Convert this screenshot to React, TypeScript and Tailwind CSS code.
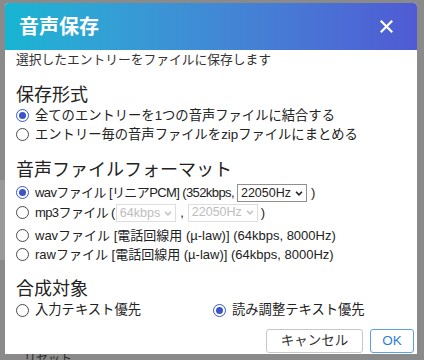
import React from "react";

const FONT = { fontFamily: '"Liberation Sans", Arial, "Noto Sans CJK JP", sans-serif' };

function Radio({ checked }: { checked?: boolean }) {
  return checked ? (
    <span className="inline-flex h-[13px] w-[13px] shrink-0 items-center justify-center rounded-full border-[1.5px] border-[#3b55c9]">
      <span className="h-[7px] w-[7px] rounded-full bg-[#3b55c9]" />
    </span>
  ) : (
    <span className="inline-block h-[13px] w-[13px] shrink-0 rounded-full border border-[#4a4a4a]" />
  );
}

function Chevron({ color }: { color: string }) {
  return (
    <svg width="8" height="5" viewBox="0 0 8 5" className="ml-[4px] shrink-0">
      <path d="M1 0.8 L4 3.8 L7 0.8" fill="none" stroke={color} strokeWidth="1.6" />
    </svg>
  );
}

function Select({ value, disabled }: { value: string; disabled?: boolean }) {
  return (
    <span
      className={
        "inline-flex h-[18px] items-center border pl-[3px] pr-[3px] text-[12.5px] " +
        (disabled ? "border-[#dedede] text-[#bdbdbd]" : "border-[#8f8f8f] text-[#222]")
      }
    >
      <span className="leading-none">{value}</span>
      <Chevron color={disabled ? "#c4c4c4" : "#222"} />
    </span>
  );
}

function Row({ checked, children, h = "h-[19px]" }: { checked?: boolean; children: React.ReactNode; h?: string }) {
  return (
    <div className={"flex items-center gap-[6px] " + h}>
      <Radio checked={checked} />
      <span className="flex items-center whitespace-nowrap">{children}</span>
    </div>
  );
}

export default function App() {
  return (
    <div className="relative h-[360px] w-[424px] overflow-hidden bg-[#8a8a8a]" style={FONT}>
      <div className="absolute left-0 top-[180px] h-[80px] w-[5px] bg-[#9a9a9a]" />
      <div className="absolute bottom-[-8px] left-[24px] text-[12px] text-[#2a2a2a]">リセット</div>
      <div className="absolute left-[5px] top-[3px] flex h-[351px] w-[412px] flex-col overflow-hidden rounded-t-[4px] bg-white text-[#222]">
        <div className="flex h-[47px] shrink-0 items-center justify-between bg-gradient-to-r from-[#15b5d3] to-[#4f5ad4] pl-[14px] pr-[24px]">
          <span className="text-[20px] font-bold text-white">音声保存</span>
          <svg width="13" height="13" viewBox="0 0 13 13">
            <path d="M1.5 1.5 L11.5 11.5 M11.5 1.5 L1.5 11.5" stroke="white" strokeWidth="2.2" strokeLinecap="square" />
          </svg>
        </div>
        <div className="flex flex-1 flex-col px-[11px] text-[13.3px]">
          <div className="mt-[2px] h-[16px] text-[12.75px] leading-[16px] text-[#333]">
            選択したエントリーをファイルに保存します
          </div>
          <div className="mt-[16px] h-[22px] text-[18px] leading-[22px] text-[#222]">保存形式</div>
          <Row checked>全てのエントリーを1つの音声ファイルに結合する</Row>
          <Row>エントリー毎の音声ファイルをzipファイルにまとめる</Row>
          <div className="mt-[15px] h-[22px] text-[18px] leading-[22px] text-[#222]">音声ファイルフォーマット</div>
          <div className="flex flex-col text-[13px]">
            <Row checked h="h-[21px] mt-[1px]">
              <span className="tracking-[-0.6px]">wavファイル [リニアPCM] (352kbps,</span>
              <span className="ml-[3px]">
                <Select value="22050Hz" />
              </span>
              <span className="ml-[4px]">)</span>
            </Row>
            <Row h="h-[19px]">
              <span className="tracking-[-0.6px]">mp3ファイル (</span>
              <span className="ml-[1px]">
                <Select value="64kbps" disabled />
              </span>
              <span className="mx-[4px]">,</span>
              <Select value="22050Hz" disabled />
              <span className="ml-[3px]">)</span>
            </Row>
            <Row h="h-[19px] mt-[4px]">wavファイル [電話回線用 (µ-law)] (64kbps, 8000Hz)</Row>
            <Row>rawファイル [電話回線用 (µ-law)] (64kbps, 8000Hz)</Row>
          </div>
          <div className="mt-[14px] h-[22px] text-[18px] leading-[22px] text-[#222]">合成対象</div>
          <div className="flex h-[20px] items-center">
            <div className="w-[197px]">
              <Row>入力テキスト優先</Row>
            </div>
            <Row checked>読み調整テキスト優先</Row>
          </div>
          <div className="mr-[-8px] mt-[9px] flex justify-end gap-[7px]">
            <button className="h-[24px] w-[97px] rounded-[3px] border border-[#c8c8c8] bg-white text-[13.5px] text-[#333]">
              キャンセル
            </button>
            <button className="h-[24px] w-[44px] rounded-[3px] border border-[#5aa0e6] bg-white text-[13.5px] text-[#2f7fd6]">
              OK
            </button>
          </div>
        </div>
      </div>
    </div>
  );
}
